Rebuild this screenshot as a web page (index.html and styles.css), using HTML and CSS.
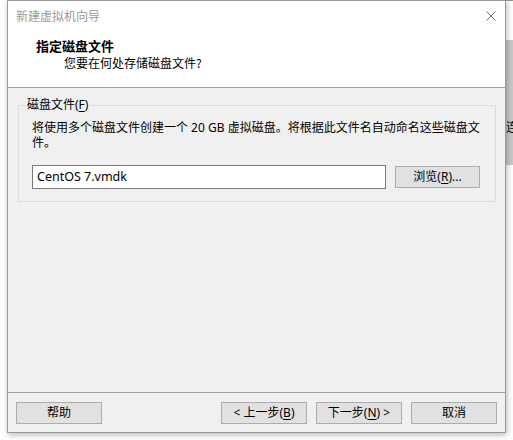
FILE: index.html
```html
<!DOCTYPE html>
<html lang="zh-CN">
<head>
<meta charset="utf-8">
<title>新建虚拟机向导</title>
<link rel="stylesheet" href="styles.css">
</head>
<body>
<div class="desktop">
  <div class="behind-strip"><span class="behind-char">连</span></div>
  <div class="behind-top"></div>
  <div class="window">
    <div class="head">
      <div class="titlebar">
        <span class="title">新建虚拟机向导</span>
        <svg class="close" width="10" height="10" viewBox="0 0 10 10"><path d="M0.5 0.5 L9.5 9.5 M9.5 0.5 L0.5 9.5" stroke="#707070" stroke-width="1" fill="none"/></svg>
      </div>
      <div class="page-title">指定磁盘文件</div>
      <div class="page-sub">您要在何处存储磁盘文件?</div>
    </div>
    <div class="content">
      <div class="group">
        <span class="legend">磁盘文件(<u>F</u>)</span>
        <div class="desc">将使用多个磁盘文件创建一个 20 GB 虚拟磁盘。将根据此文件名自动命名这些磁盘文<br>件。</div>
        <div class="file-row">
          <div class="input">CentOS 7.vmdk</div>
          <button class="btn browse">浏览(<u>R</u>)...</button>
        </div>
      </div>
    </div>
    <div class="footer">
      <button class="btn">帮助</button>
      <div class="spacer"></div>
      <button class="btn">&lt; 上一步(<u>B</u>)</button>
      <button class="btn">下一步(<u>N</u>) &gt;</button>
      <button class="btn">取消</button>
    </div>
  </div>
</div>
</body>
</html>
```
FILE: styles.css
```css
* { box-sizing: border-box; }
html, body { margin: 0; padding: 0; }
body {
  background: #ffffff;
  font-family: "Segoe UI", "Noto Sans", "Noto Sans CJK SC", sans-serif;
  font-size: 12px;
  color: #000;
}
.desktop {
  position: relative;
  width: 513px;
  height: 440px;
  overflow: hidden;
  background: #ffffff;
}
.behind-strip {
  position: absolute;
  left: 505px;
  top: 40px;
  width: 8px;
  height: 125px;
  background: #c8c8c8;
  overflow: hidden;
}
.behind-char {
  position: absolute;
  left: 1px;
  top: 80px;
  font-family: "Noto Sans CJK SC", sans-serif;
  font-size: 12px;
  line-height: 14px;
  color: #000;
}
.behind-top {
  position: absolute;
  left: 215px;
  top: 0;
  width: 298px;
  height: 1px;
  background: #8a9a80;
}
.window {
  position: absolute;
  left: 7px;
  top: 0;
  width: 499px;
  height: 433px;
  border: 1px solid #9a9a9a;
  background: #f0f0f0;
  box-shadow: 1px 2px 6px rgba(0,0,0,0.28);
  display: flex;
  flex-direction: column;
}
.head {
  background: #ffffff;
  height: 87px;
  border-bottom: 1px solid #a0a0a0;
}
.titlebar {
  height: 30px;
  display: flex;
  align-items: center;
  justify-content: space-between;
  padding: 0 9px 0 8px;
}
.title {
  font-family: "Noto Sans CJK SC", sans-serif;
  color: #9a9a9a;
  font-size: 12px;
  line-height: 16px;
}
.close { display: block; }
.page-title {
  margin-top: 7px;
  padding-left: 28px;
  font-family: "Noto Sans CJK SC", sans-serif;
  font-weight: bold;
  font-size: 13px;
  line-height: 16px;
}
.page-sub {
  margin-top: 1px;
  padding-left: 56px;
  font-family: "Noto Sans CJK SC", sans-serif;
  font-size: 12px;
  line-height: 16px;
}
.content {
  flex: 1;
  padding: 17px 9px 0 10px;
}
.group {
  position: relative;
  height: 97px;
  border: 1px solid #dcdcdc;
  padding: 14px 13px 0 13px;
}
.legend {
  position: absolute;
  left: 6px;
  top: -8px;
  padding: 0 2px;
  background: #f0f0f0;
  line-height: 14px;
  white-space: nowrap;
}
.desc {
  line-height: 15px;
  white-space: nowrap;
}
.file-row {
  margin-top: 15px;
  display: flex;
  align-items: center;
  gap: 9px;
}
.input {
  width: 354px;
  height: 24px;
  border: 1px solid #7a7a7a;
  background: #ffffff;
  padding-left: 4px;
  line-height: 22px;
  font-size: 12.5px;
  white-space: nowrap;
}
.btn {
  width: 86px;
  height: 22px;
  border: 1px solid #adadad;
  background: #e1e1e1;
  font-family: inherit;
  font-size: 12px;
  color: #000;
  padding: 0;
  line-height: 20px;
  white-space: nowrap;
}
.browse { width: 85px; }
.footer {
  height: 40px;
  border-top: 1px solid #a0a0a0;
  padding: 9px 8px 8px 8px;
  display: flex;
  gap: 9px;
}
.spacer { flex: 1; }
u { text-decoration: underline; text-underline-offset: 2px; }
```
